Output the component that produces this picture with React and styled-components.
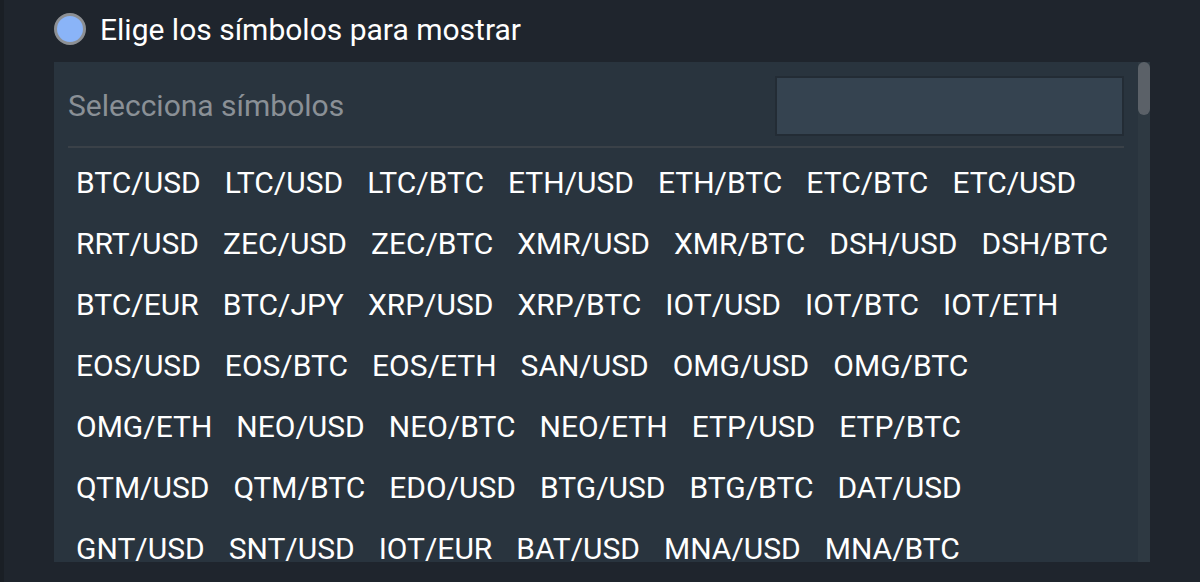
import React from 'react';
import styled, { createGlobalStyle } from 'styled-components';

const GlobalStyle = createGlobalStyle`
  html, body {
    margin: 0;
    background: #1f252d;
    font-family: Roboto, "Noto Sans", sans-serif;
  }
`;

const Page = styled.div`
  height: 582px;
  border-left: 4px solid #1a1f25;
  padding-left: 50px;
  box-sizing: border-box;
  overflow: hidden;
`;

const Header = styled.label`
  display: flex;
  align-items: center;
  gap: 14px;
  height: 62px;
  padding-bottom: 4px;
  box-sizing: border-box;
  color: #ffffff;
  font-size: 30px;
`;

const Radio = styled.span`
  width: 32px;
  height: 32px;
  box-sizing: border-box;
  border-radius: 50%;
  border: 3px solid #8d9094;
  background: #8ab4f8;
  flex-shrink: 0;
`;

const Panel = styled.div`
  display: flex;
  width: 1096px;
  height: 500px;
  background: #29343e;
  overflow: hidden;
`;

const Content = styled.div`
  flex: 1;
  padding: 14px 14px 0 14px;
  min-width: 0;
`;

const SearchRow = styled.div`
  display: flex;
  align-items: center;
  justify-content: space-between;
  height: 60px;
`;

const Placeholder = styled.span`
  color: #8a9096;
  font-size: 30px;
  padding-bottom: 2px;
`;

const SearchInput = styled.input`
  width: 349px;
  height: 60px;
  box-sizing: border-box;
  background: #354350;
  border: 2px solid #232c35;
  outline: none;
  color: #ffffff;
  font: inherit;
  font-size: 22px;
  padding: 0 10px;
`;

const Divider = styled.div`
  height: 2px;
  margin-top: 10px;
  background: #3a4148;
`;

const List = styled.div`
  padding-top: 4px;
`;

const Row = styled.div`
  display: flex;
  gap: 8px;
  height: 61px;
  align-items: center;
`;

const Symbol = styled.span`
  padding: 0 8px;
  color: #ffffff;
  font-size: 30px;
  white-space: nowrap;
  cursor: pointer;
`;

const Track = styled.div`
  width: 12px;
  background: #2e3942;
`;

const Thumb = styled.div`
  height: 53px;
  border-radius: 6px;
  background: #5b6168;
`;

const rows = [
  ['BTC/USD', 'LTC/USD', 'LTC/BTC', 'ETH/USD', 'ETH/BTC', 'ETC/BTC', 'ETC/USD'],
  ['RRT/USD', 'ZEC/USD', 'ZEC/BTC', 'XMR/USD', 'XMR/BTC', 'DSH/USD', 'DSH/BTC'],
  ['BTC/EUR', 'BTC/JPY', 'XRP/USD', 'XRP/BTC', 'IOT/USD', 'IOT/BTC', 'IOT/ETH'],
  ['EOS/USD', 'EOS/BTC', 'EOS/ETH', 'SAN/USD', 'OMG/USD', 'OMG/BTC'],
  ['OMG/ETH', 'NEO/USD', 'NEO/BTC', 'NEO/ETH', 'ETP/USD', 'ETP/BTC'],
  ['QTM/USD', 'QTM/BTC', 'EDO/USD', 'BTG/USD', 'BTG/BTC', 'DAT/USD'],
  ['GNT/USD', 'SNT/USD', 'IOT/EUR', 'BAT/USD', 'MNA/USD', 'MNA/BTC'],
];

const App = () => (
  <Page>
    <GlobalStyle />
    <Header>
      <Radio />
      Elige los símbolos para mostrar
    </Header>
    <Panel>
      <Content>
        <SearchRow>
          <Placeholder>Selecciona símbolos</Placeholder>
          <SearchInput type="text" aria-label="Buscar símbolo" />
        </SearchRow>
        <Divider />
        <List>
          {rows.map((row, i) => (
            <Row key={i}>
              {row.map((s) => (
                <Symbol key={s}>{s}</Symbol>
              ))}
            </Row>
          ))}
        </List>
      </Content>
      <Track>
        <Thumb />
      </Track>
    </Panel>
  </Page>
);

export default App;
